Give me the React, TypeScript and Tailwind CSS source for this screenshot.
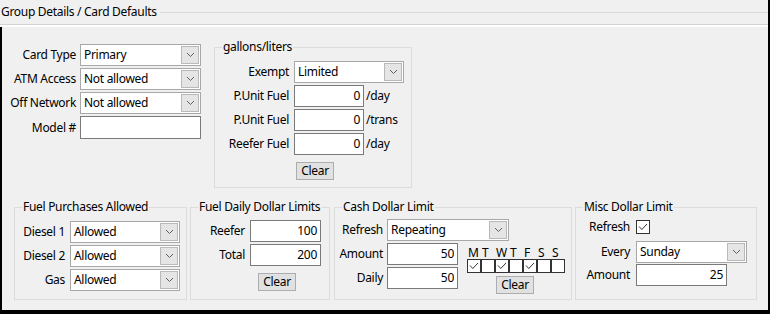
import type { ReactNode } from "react"

const font = { fontFamily: "'Noto Sans', 'Segoe UI', sans-serif" }

function Chevron() {
    return (
        <svg width="9" height="6" viewBox="0 0 9 6" className="block">
            <polyline points="1,1 4.5,4.5 8,1" fill="none" stroke="#606060" strokeWidth="1" />
        </svg>
    )
}

function Select({ value, width }: { value: string; width: string }) {
    return (
        <div className={`${width} h-[22px] shrink-0 flex items-center bg-white border border-[#a8a8a8]`}>
            <span className="flex-1 pl-[3px] leading-none">{value}</span>
            <div className="w-[18px] h-[18px] mr-[1px] flex items-center justify-center bg-[#e5e5e5] border border-[#b9b9b9]">
                <Chevron />
            </div>
        </div>
    )
}

function NumInput({ value, width }: { value: string; width: string }) {
    return (
        <div className={`${width} h-[22px] shrink-0 flex items-center justify-end pr-[3px] bg-white border border-[#7a7a7a]`}>
            {value}
        </div>
    )
}

function Check({ checked }: { checked: boolean }) {
    return (
        <div className="w-[14px] h-[14px] shrink-0 bg-white border border-[#333] flex items-center justify-center">
            {checked && (
                <svg width="10" height="8" viewBox="0 0 10 8">
                    <polyline points="1,3.5 3.8,6.5 9,1" fill="none" stroke="#333" strokeWidth="1" />
                </svg>
            )}
        </div>
    )
}

function ClearButton({ className = "" }: { className?: string }) {
    return (
        <div className={`w-[38px] h-[18px] flex items-center justify-center bg-[#e1e1e1] border border-[#adadad] ${className}`}>
            Clear
        </div>
    )
}

function GroupBox({ title, className, children }: { title: string; className: string; children: ReactNode }) {
    return (
        <fieldset className={`border border-[#dcdcdc] shrink-0 ${className}`}>
            <legend className="ml-[7px] px-[1px] leading-[16px]">{title}</legend>
            {children}
        </fieldset>
    )
}

function Row({ label, labelW, gap, className = "", children }: { label: string; labelW: string; gap: string; className?: string; children: ReactNode }) {
    return (
        <div className={`flex items-center ${gap} ${className}`}>
            <span className={`${labelW} shrink-0 text-right`}>{label}</span>
            {children}
        </div>
    )
}

export default function App() {
    const days = ["M", "T", "W", "T", "F", "S", "S"]
    const checked = [true, false, true, false, true, false, false]

    return (
        <div style={font} className="w-[770px] h-[314px] bg-[#f0f0f0] text-[12px] tracking-[-0.3px] text-black border-r-2 border-black flex flex-col">
            <div className="h-[24px] flex items-center">
                <span className="pl-[1px] pr-[3px] leading-none">Group Details / Card Defaults</span>
                <div className="flex-1 h-px bg-[#dadada]" />
            </div>
            <div className="h-px bg-[#d4d4d4]" />
            <div className="h-[2px] bg-white" />

            <div className="flex-1 border-l-2 border-b-4 border-black flex flex-col">
                <div className="flex items-start">
                    <div className="mt-[17px] flex flex-col gap-[2px]">
                        <Row label="Card Type" labelW="w-[74px]" gap="gap-[4px]">
                            <Select value="Primary" width="w-[121px]" />
                        </Row>
                        <Row label="ATM Access" labelW="w-[74px]" gap="gap-[4px]">
                            <Select value="Not allowed" width="w-[121px]" />
                        </Row>
                        <Row label="Off Network" labelW="w-[74px]" gap="gap-[4px]">
                            <Select value="Not allowed" width="w-[121px]" />
                        </Row>
                        <Row label="Model #" labelW="w-[74px]" gap="gap-[4px]">
                            <div className="w-[121px] h-[23px] bg-white border border-[#7a7a7a]" />
                        </Row>
                    </div>

                    <GroupBox title="gallons/liters" className="ml-[13px] mt-[12px] w-[198px] h-[149px]">
                        <div className="pt-[6px] flex flex-col gap-[2px]">
                            <Row label="Exempt" labelW="w-[74px]" gap="gap-[5px]">
                                <Select value="Limited" width="w-[110px]" />
                            </Row>
                            <Row label="P.Unit Fuel" labelW="w-[74px]" gap="gap-[5px]">
                                <NumInput value="0" width="w-[70px]" />
                                <span className="-ml-[3px]">/day</span>
                            </Row>
                            <Row label="P.Unit Fuel" labelW="w-[74px]" gap="gap-[5px]">
                                <NumInput value="0" width="w-[70px]" />
                                <span className="-ml-[3px]">/trans</span>
                            </Row>
                            <Row label="Reefer Fuel" labelW="w-[74px]" gap="gap-[5px]">
                                <NumInput value="0" width="w-[70px]" />
                                <span className="-ml-[3px]">/day</span>
                            </Row>
                            <ClearButton className="ml-[81px] mt-[5px]" />
                        </div>
                    </GroupBox>
                </div>

                <div className="mt-[11px] ml-[12px] flex items-start">
                    <GroupBox title="Fuel Purchases Allowed" className="w-[173px] h-[101px]">
                        <div className="pt-[6px] flex flex-col gap-[2px]">
                            <Row label="Diesel 1" labelW="w-[50px]" gap="gap-[5px]">
                                <Select value="Allowed" width="w-[110px]" />
                            </Row>
                            <Row label="Diesel 2" labelW="w-[50px]" gap="gap-[5px]">
                                <Select value="Allowed" width="w-[110px]" />
                            </Row>
                            <Row label="Gas" labelW="w-[50px]" gap="gap-[5px]">
                                <Select value="Allowed" width="w-[110px]" />
                            </Row>
                        </div>
                    </GroupBox>

                    <GroupBox title="Fuel Daily Dollar Limits" className="ml-[3px] w-[140px] h-[101px]">
                        <div className="pt-[5px] flex flex-col gap-[2px]">
                            <Row label="Reefer" labelW="w-[54px]" gap="gap-[5px]">
                                <NumInput value="100" width="w-[71px]" />
                            </Row>
                            <Row label="Total" labelW="w-[54px]" gap="gap-[5px]">
                                <NumInput value="200" width="w-[71px]" />
                            </Row>
                            <ClearButton className="ml-[67px] mt-[5px]" />
                        </div>
                    </GroupBox>

                    <GroupBox title="Cash Dollar Limit" className="ml-[4px] w-[238px] h-[101px]">
                        <div className="pt-[4px] flex flex-col">
                            <Row label="Refresh" labelW="w-[48px]" gap="gap-[4px]">
                                <Select value="Repeating" width="w-[122px]" />
                            </Row>
                            <div className="mt-[2px] flex items-start">
                                <div className="flex flex-col gap-[2px]">
                                    <Row label="Amount" labelW="w-[48px]" gap="gap-[4px]">
                                        <NumInput value="50" width="w-[71px]" />
                                    </Row>
                                    <Row label="Daily" labelW="w-[48px]" gap="gap-[4px]">
                                        <NumInput value="50" width="w-[71px]" />
                                    </Row>
                                </div>
                                <div className="ml-[9px] flex flex-col">
                                    <div className="flex h-[16px] items-end leading-none">
                                        {days.map((d, i) => (
                                            <span key={i} className="w-[14px] pl-[1px]">{d}</span>
                                        ))}
                                    </div>
                                    <div className="flex">
                                        {checked.map((c, i) => (
                                            <Check key={i} checked={c} />
                                        ))}
                                    </div>
                                    <ClearButton className="ml-[29px] mt-[3px]" />
                                </div>
                            </div>
                        </div>
                    </GroupBox>

                    <GroupBox title="Misc Dollar Limit" className="ml-[3px] w-[182px] h-[101px]">
                        <div className="pt-[3px] flex flex-col">
                            <Row label="Refresh" labelW="w-[54px]" gap="gap-[6px]">
                                <Check checked={true} />
                            </Row>
                            <Row label="Every" labelW="w-[54px]" gap="gap-[6px]" className="mt-[5px]">
                                <Select value="Sunday" width="w-[111px]" />
                            </Row>
                            <Row label="Amount" labelW="w-[54px]" gap="gap-[6px]" className="mt-[1px]">
                                <NumInput value="25" width="w-[91px]" />
                            </Row>
                        </div>
                    </GroupBox>
                </div>
            </div>
        </div>
    )
}
